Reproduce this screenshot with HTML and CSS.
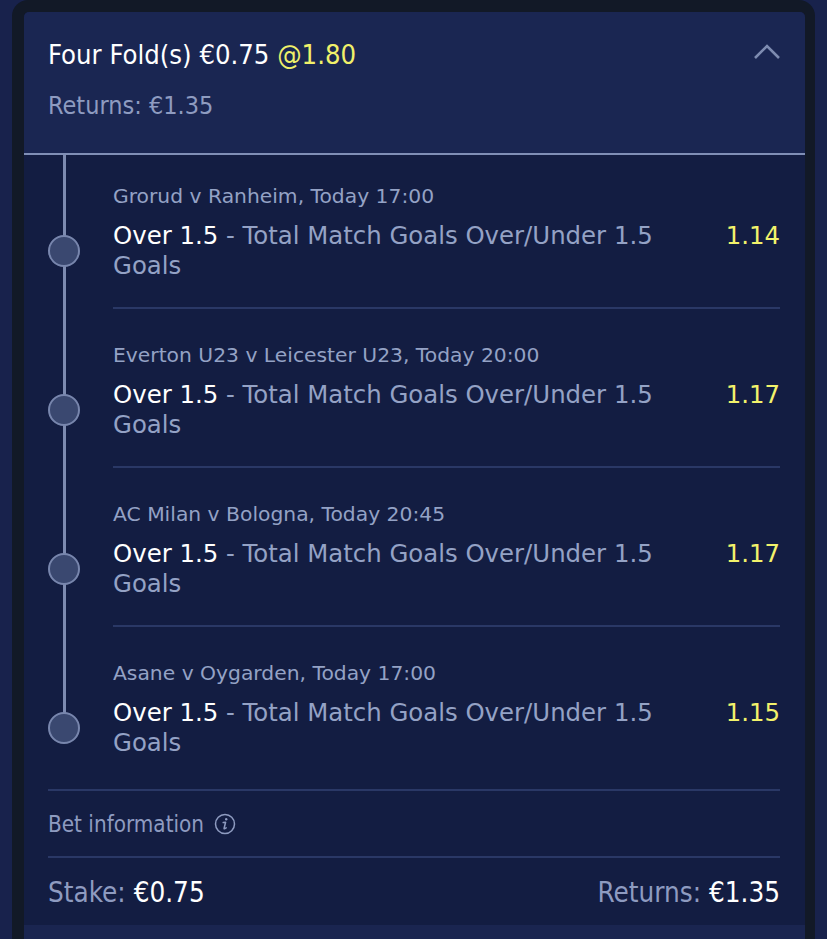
FILE: index.html
```html
<!DOCTYPE html>
<html lang="en">
<head>
    <meta charset="UTF-8">
    <meta name="viewport" content="width=device-width, initial-scale=1.0">
    <title>Bet Slip</title>
    <link rel="stylesheet" href="styles.css">
</head>
<body>
    <div class="frame">
        <div class="card">
            <div class="card-head">
                <div class="title-row">
                    <div class="title">Four Fold(s) €0.75 <span class="price">@1.80</span></div>
                    <svg class="chevron" width="28" height="18" viewBox="0 0 28 18">
                        <polyline points="3,15 15,3 27,15" fill="none" stroke="#7d8bb0" stroke-width="2.6"/>
                    </svg>
                </div>
                <div class="head-returns">Returns: €1.35</div>
            </div>

            <div class="legs">
                <div class="leg">
                    <div class="meta">Grorud v Ranheim, Today 17:00</div>
                    <div class="dot"></div>
                    <div class="selection"><span class="pick">Over 1.5</span> - Total Match Goals Over/Under 1.5<br>Goals</div>
                    <div class="odds">1.14</div>
                    <div class="divider"></div>
                </div>
                <div class="leg">
                    <div class="meta">Everton U23 v Leicester U23, Today 20:00</div>
                    <div class="dot"></div>
                    <div class="selection"><span class="pick">Over 1.5</span> - Total Match Goals Over/Under 1.5<br>Goals</div>
                    <div class="odds">1.17</div>
                    <div class="divider"></div>
                </div>
                <div class="leg">
                    <div class="meta">AC Milan v Bologna, Today 20:45</div>
                    <div class="dot"></div>
                    <div class="selection"><span class="pick">Over 1.5</span> - Total Match Goals Over/Under 1.5<br>Goals</div>
                    <div class="odds">1.17</div>
                    <div class="divider"></div>
                </div>
                <div class="leg">
                    <div class="meta">Asane v Oygarden, Today 17:00</div>
                    <div class="dot"></div>
                    <div class="selection"><span class="pick">Over 1.5</span> - Total Match Goals Over/Under 1.5<br>Goals</div>
                    <div class="odds">1.15</div>
                </div>
            </div>

            <div class="bet-info">
                <span>Bet information</span>
                <svg class="info-icon" width="22" height="22" viewBox="0 0 22 22">
                    <circle cx="11" cy="11" r="9.5" fill="none" stroke="#8e9bc0" stroke-width="1.5"/>
                    <circle cx="12.2" cy="6.3" r="1.2" fill="#8e9bc0"/>
                    <path d="M9.2 9.6 L11.6 9.3 L10.1 15.2 Q9.9 16.1 10.8 15.7 L12.2 14.9" fill="none" stroke="#8e9bc0" stroke-width="1.5" stroke-linecap="round" stroke-linejoin="round"/>
                </svg>
            </div>

            <div class="totals">
                <div>Stake: <span class="amount">€0.75</span></div>
                <div>Returns: <span class="amount">€1.35</span></div>
            </div>
        </div>
        <div class="card-next"></div>
    </div>
</body>
</html>
```

FILE: styles.css
```css
body {
    margin: 0;
    background-color: #18224c;
    font-family: "DejaVu Sans", Verdana, sans-serif;
    overflow: hidden;
}

.frame {
    margin: 0 12px;
    padding: 12px 10px 0 12px;
    background-color: #121927;
    border-radius: 16px;
    height: 960px;
}

.card {
    background-color: #131d42;
    border-radius: 5px 5px 0 0;
    overflow: hidden;
}

/* header */
.card-head {
    background-color: #1a2652;
    padding: 27px 25px 34px 24px;
    border-bottom: 2px solid #808fb6;
}

.title-row {
    display: flex;
    justify-content: space-between;
    align-items: center;
}

.title {
    font-family: "DejaVu Sans Condensed", "DejaVu Sans", sans-serif;
    font-size: 27.2px;
    line-height: 32px;
    color: #fff;
}

.price {
    color: #f0f06a;
}

.chevron {
    display: block;
    margin-top: -7px;
}

.head-returns {
    margin-top: 22px;
    font-family: "DejaVu Sans Condensed", "DejaVu Sans", sans-serif;
    font-size: 25px;
    line-height: 26px;
    color: #8e9bc0;
}

/* legs with the timeline */
.leg {
    display: grid;
    grid-template-columns: 89px 1fr auto;
    row-gap: 12px;
    padding-top: 33px;
    padding-right: 25px;
    background: linear-gradient(#7d8bb0, #7d8bb0) no-repeat 39px 0 / 3px 100%;
}

.leg:first-child {
    padding-top: 28px;
}

.leg:last-child {
    padding-bottom: 31px;
    background-size: 3px 101px;
}

.meta {
    grid-column: 2 / 4;
    font-size: 20.3px;
    line-height: 26px;
    color: #94a2c5;
}

.dot {
    grid-column: 1;
    grid-row: 2;
    align-self: center;
    width: 28px;
    height: 28px;
    margin-left: 24px;
    border: 2px solid #7886ad;
    border-radius: 50%;
    background-color: #3a4870;
}

.selection {
    grid-column: 2;
    grid-row: 2;
    font-size: 24.4px;
    line-height: 30px;
    color: #94a2c5;
}

.pick {
    color: #fff;
}

.odds {
    grid-column: 3;
    grid-row: 2;
    align-self: start;
    font-size: 24.4px;
    line-height: 30px;
    color: #f2f26b;
}

.divider {
    grid-column: 2 / 4;
    height: 2px;
    margin-top: 14px;
    background-color: #2a3866;
}

/* footer */
.bet-info {
    display: flex;
    align-items: center;
    gap: 10px;
    margin: 0 25px 0 24px;
    padding: 21px 0 20px;
    border-top: 2px solid #2a3866;
    border-bottom: 2px solid #2a3866;
    font-family: "DejaVu Sans Condensed", "DejaVu Sans", sans-serif;
    font-size: 22.3px;
    line-height: 24px;
    color: #8e9bc0;
}

.totals {
    display: flex;
    justify-content: space-between;
    padding: 20px 25px 17px 24px;
    font-family: "DejaVu Sans Condensed", "DejaVu Sans", sans-serif;
    font-size: 27.6px;
    line-height: 30px;
    color: #8e9bc0;
}

.amount {
    color: #fff;
}

.card-next {
    height: 60px;
    background-color: #1a2550;
}
```
